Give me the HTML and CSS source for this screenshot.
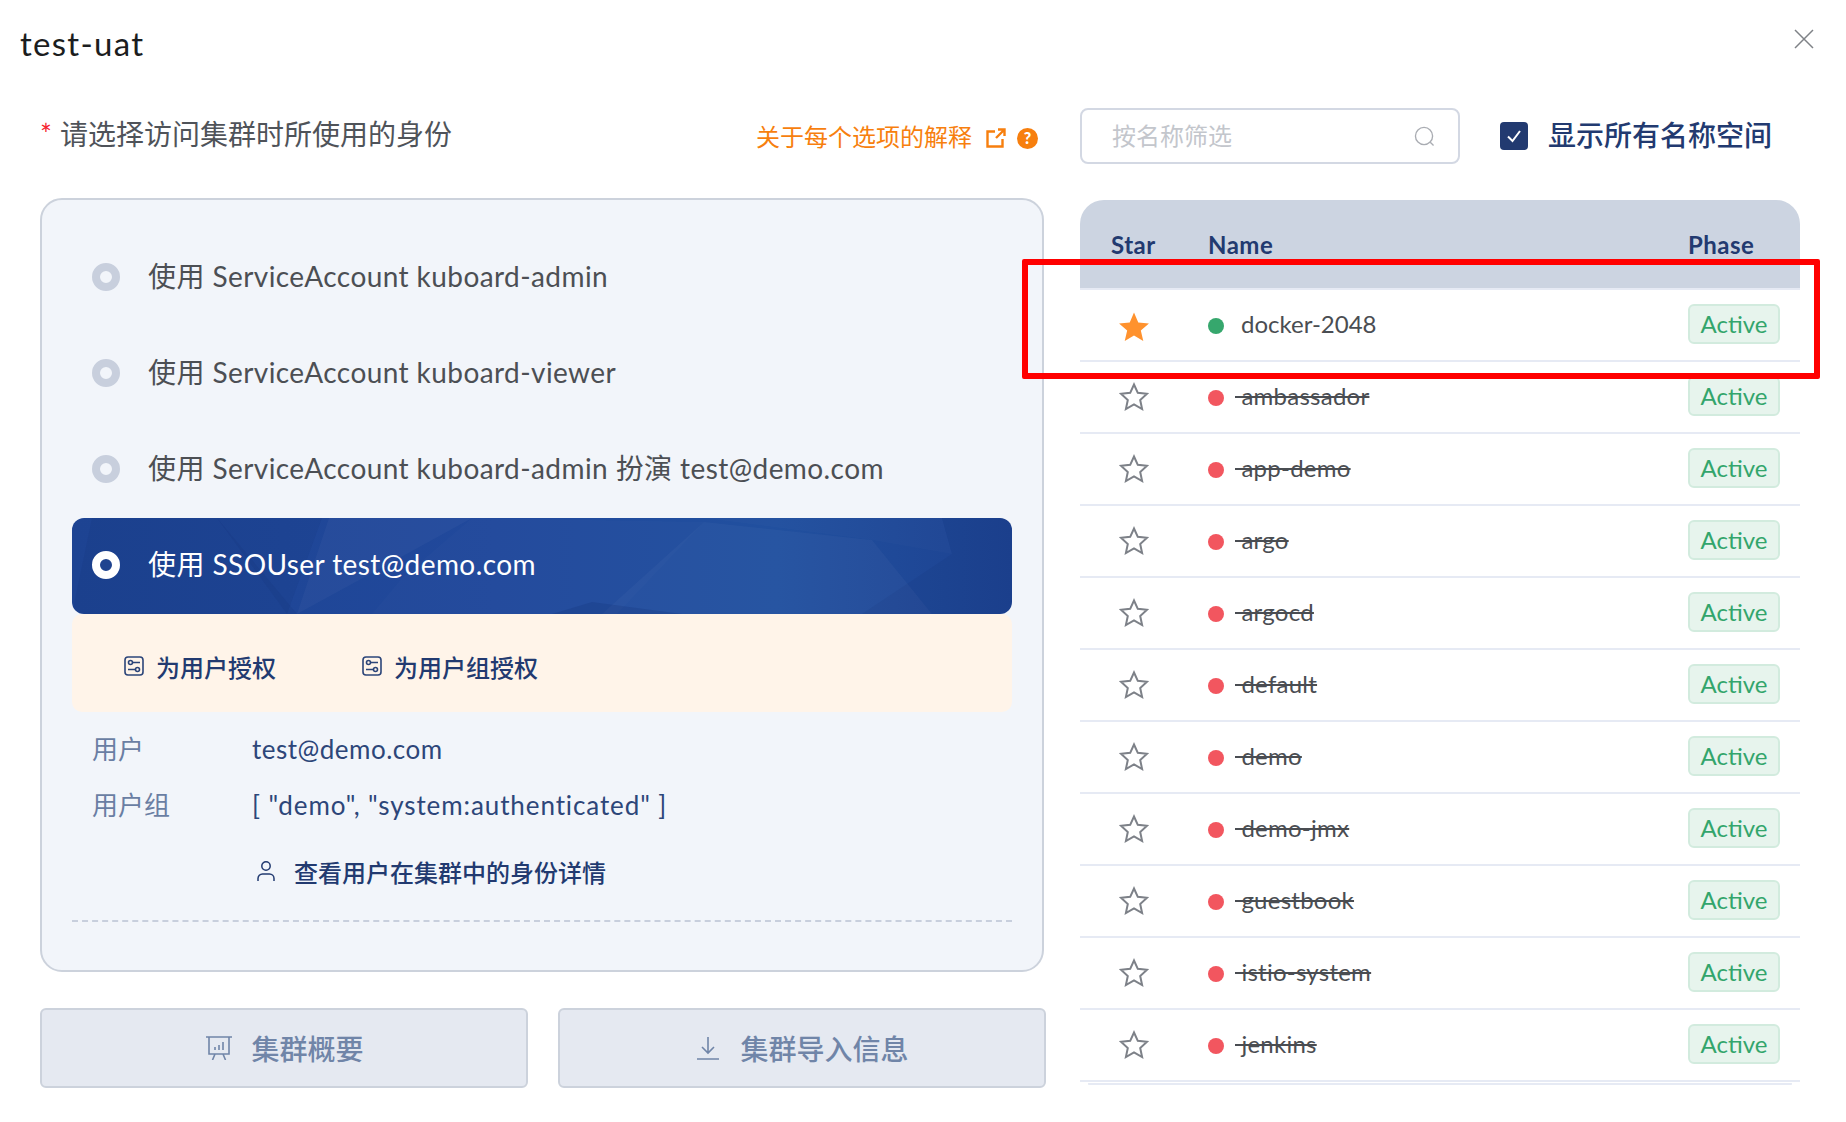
FILE: index.html
```html
<!DOCTYPE html>
<html lang="zh">
<head>
<meta charset="utf-8">
<title>test-uat</title>
<link rel="stylesheet" href="styles.css">
</head>
<body>
<div class="dialog">
  <header class="title-bar">
    <h1 class="title">test-uat</h1>
    <svg class="close" viewBox="0 0 20 20"><path d="M1 1l18 18M19 1L1 19"/></svg>
  </header>
  <div class="columns">
    <section class="left">
      <div class="left-head">
        <div class="label"><span class="req">*</span>请选择访问集群时所使用的身份</div>
        <div class="explain">
          <span class="explain-text">关于每个选项的解释</span>
          <svg class="ext" viewBox="0 0 20 20"><path d="M9 3.500H1.500V18.500h15V11M12 1.500h6.500V8M18 2l-8 8"/></svg>
          <svg class="help" viewBox="0 0 21 21"><circle cx="10.500" cy="10.500" r="10.500"/><text x="10.500" y="16" text-anchor="middle">?</text></svg>
        </div>
      </div>
      <div class="panel">
        <div class="opt"><span class="radio"></span><span class="opt-text">使用 ServiceAccount kuboard-admin</span></div>
        <div class="opt"><span class="radio"></span><span class="opt-text">使用 ServiceAccount kuboard-viewer</span></div>
        <div class="opt"><span class="radio"></span><span class="opt-text">使用 ServiceAccount kuboard-admin 扮演 test@demo.com</span></div>
        <div class="opt opt-on">
          <svg class="facets" viewBox="0 0 940 96" preserveAspectRatio="none">
            <polygon class="dk" points="20,0 145,0 225,96 0,96"/>
            <polygon class="dk" points="145,0 250,0 215,96"/>
            <polygon class="lt" points="257,0 400,0 300,55 225,96"/>
            <polygon class="lt2" points="400,0 632,4 545,96 300,96 330,60"/>
            <polygon class="lt" points="632,4 800,22 860,96 530,96"/>
            <polygon class="lt2" points="632,0 870,0 880,36 800,22"/>
            <polygon class="dk" points="870,0 940,0 940,96 790,96 880,36"/>
            <polygon class="dk2" points="520,84 610,96 480,96"/>
          </svg>
          <span class="radio"></span><span class="opt-text">使用 SSOUser test@demo.com</span>
        </div>
        <div class="grant">
          <div class="grant-item">
            <svg class="ico-ctl" viewBox="0 0 20 20"><rect x="1" y="1" width="18" height="18" rx="3"/><circle cx="6.500" cy="6.500" r="2"/><circle cx="13.500" cy="13.500" r="2"/><path d="M8.500 6.500H16M4 13.500h7.500"/></svg>
            <span>为用户授权</span>
          </div>
          <div class="grant-item">
            <svg class="ico-ctl" viewBox="0 0 20 20"><rect x="1" y="1" width="18" height="18" rx="3"/><circle cx="6.500" cy="6.500" r="2"/><circle cx="13.500" cy="13.500" r="2"/><path d="M8.500 6.500H16M4 13.500h7.500"/></svg>
            <span>为用户组授权</span>
          </div>
        </div>
        <dl class="info">
          <div class="info-row"><dt>用户</dt><dd>test@demo.com</dd></div>
          <div class="info-row"><dt>用户组</dt><dd class="groups">[ "demo", "system:authenticated" ]</dd></div>
        </dl>
        <div class="identity">
          <svg class="ico-user" viewBox="0 0 18 20"><circle cx="9" cy="5" r="4.200"/><path d="M1 20v-2.500A4.500 4.500 0 0 1 5.500 13h7a4.500 4.500 0 0 1 4.500 4.500V20"/></svg>
          <span>查看用户在集群中的身份详情</span>
        </div>
        <div class="dash"></div>
      </div>
      <div class="actions">
        <button class="btn">
          <svg class="ico-board" viewBox="0 0 26 24"><path d="M0 1h26M3 1v17h20V1M9 18l-2.500 6M17 18l2.500 6M9 14v-3M13 14V9M17 14V6"/></svg>
          <span>集群概要</span>
        </button>
        <button class="btn">
          <svg class="ico-down" viewBox="0 0 22 24"><path d="M11 1v16M5 11l6 6 6-6M0 23h22"/></svg>
          <span>集群导入信息</span>
        </button>
      </div>
    </section>
    <section class="right">
      <div class="right-head">
        <div class="search">
          <span class="lift">按名称筛选</span>
          <svg class="ico-search" viewBox="0 0 22 22"><circle cx="10.500" cy="10.500" r="9"/><path d="M17 17l3.500 3.500"/></svg>
        </div>
        <div class="check">
          <span class="box"><svg viewBox="0 0 28 28"><path d="M8 14.500l4.500 4.500L20 9"/></svg></span>
          <span class="lift">显示所有名称空间</span>
        </div>
      </div>
      <div class="table">
        <div class="thead">
          <span class="c-star">Star</span><span class="c-name">Name</span><span class="c-phase">Phase</span>
        </div>
        <div class="row">
          <svg class="star star-on" viewBox="0 0 30 30"><path d="M15 1.500l4 9.300 10 .9-7.600 6.600 2.300 9.800L15 23l-8.700 5.100 2.300-9.800L1 11.700l10-.9z"/></svg>
          <div class="c-name cell"><i class="dot ok"></i><span>docker-2048</span></div>
          <span class="tag">Active</span>
        </div>
        <div class="row">
          <svg class="star" viewBox="0 0 30 30"><path d="M15 2.500l3.800 8.300 9.200 1-6.800 6.200 1.900 9-8.100-4.600-8.100 4.600 1.900-9L2 11.800l9.200-1z"/></svg>
          <div class="c-name cell"><i class="dot bad"></i><del>&nbsp;ambassador</del></div>
          <span class="tag">Active</span>
        </div>
        <div class="row">
          <svg class="star" viewBox="0 0 30 30"><path d="M15 2.500l3.800 8.300 9.200 1-6.800 6.200 1.900 9-8.100-4.600-8.100 4.600 1.900-9L2 11.800l9.200-1z"/></svg>
          <div class="c-name cell"><i class="dot bad"></i><del>&nbsp;app-demo</del></div>
          <span class="tag">Active</span>
        </div>
        <div class="row">
          <svg class="star" viewBox="0 0 30 30"><path d="M15 2.500l3.800 8.300 9.200 1-6.800 6.200 1.900 9-8.100-4.600-8.100 4.600 1.900-9L2 11.800l9.200-1z"/></svg>
          <div class="c-name cell"><i class="dot bad"></i><del>&nbsp;argo</del></div>
          <span class="tag">Active</span>
        </div>
        <div class="row">
          <svg class="star" viewBox="0 0 30 30"><path d="M15 2.500l3.800 8.300 9.200 1-6.800 6.200 1.900 9-8.100-4.600-8.100 4.600 1.900-9L2 11.800l9.200-1z"/></svg>
          <div class="c-name cell"><i class="dot bad"></i><del>&nbsp;argocd</del></div>
          <span class="tag">Active</span>
        </div>
        <div class="row">
          <svg class="star" viewBox="0 0 30 30"><path d="M15 2.500l3.800 8.300 9.200 1-6.800 6.200 1.900 9-8.100-4.600-8.100 4.600 1.900-9L2 11.800l9.200-1z"/></svg>
          <div class="c-name cell"><i class="dot bad"></i><del>&nbsp;default</del></div>
          <span class="tag">Active</span>
        </div>
        <div class="row">
          <svg class="star" viewBox="0 0 30 30"><path d="M15 2.500l3.800 8.300 9.200 1-6.800 6.200 1.900 9-8.100-4.600-8.100 4.600 1.900-9L2 11.800l9.200-1z"/></svg>
          <div class="c-name cell"><i class="dot bad"></i><del>&nbsp;demo</del></div>
          <span class="tag">Active</span>
        </div>
        <div class="row">
          <svg class="star" viewBox="0 0 30 30"><path d="M15 2.500l3.800 8.300 9.200 1-6.800 6.200 1.900 9-8.100-4.600-8.100 4.600 1.900-9L2 11.800l9.200-1z"/></svg>
          <div class="c-name cell"><i class="dot bad"></i><del>&nbsp;demo-jmx</del></div>
          <span class="tag">Active</span>
        </div>
        <div class="row">
          <svg class="star" viewBox="0 0 30 30"><path d="M15 2.500l3.800 8.300 9.200 1-6.800 6.200 1.900 9-8.100-4.600-8.100 4.600 1.900-9L2 11.800l9.200-1z"/></svg>
          <div class="c-name cell"><i class="dot bad"></i><del>&nbsp;guestbook</del></div>
          <span class="tag">Active</span>
        </div>
        <div class="row">
          <svg class="star" viewBox="0 0 30 30"><path d="M15 2.500l3.800 8.300 9.200 1-6.800 6.200 1.900 9-8.100-4.600-8.100 4.600 1.900-9L2 11.800l9.200-1z"/></svg>
          <div class="c-name cell"><i class="dot bad"></i><del>&nbsp;istio-system</del></div>
          <span class="tag">Active</span>
        </div>
        <div class="row">
          <svg class="star" viewBox="0 0 30 30"><path d="M15 2.500l3.800 8.300 9.200 1-6.800 6.200 1.900 9-8.100-4.600-8.100 4.600 1.900-9L2 11.800l9.200-1z"/></svg>
          <div class="c-name cell"><i class="dot bad"></i><del>&nbsp;jenkins</del></div>
          <span class="tag">Active</span>
        </div>
        <div class="table-end"></div>
      </div>
    </section>
  </div>
  <div class="highlight"></div>
</div>
</body>
</html>
```
FILE: styles.css
```css
* { box-sizing: border-box; }
html, body { margin: 0; padding: 0; background: #fff; }
body {
  width: 1846px;
  height: 1122px;
  overflow: hidden;
  font-family: "Lato", "Noto Sans CJK SC", sans-serif;
  color: #4a4d52;
}
.dialog { position: relative; width: 1846px; height: 1122px; }

.title-bar { height: 88px; display: flex; justify-content: space-between; align-items: flex-start; padding: 29px 32px 0 20px; }
.title { margin: -1px 0 0; font-size: 33px; line-height: 30px; font-weight: 400; color: #1b1d20; letter-spacing: 1.3px; }
.close { width: 20px; height: 20px; fill: none; stroke: #7f8287; stroke-width: 1.5; }

.columns { display: flex; padding-left: 40px; }
.left { width: 1006px; }
.right { width: 720px; margin-left: 34px; }

.left-head { height: 110px; display: flex; justify-content: space-between; padding: 29px 8px 0 0; }
.label { font-size: 28px; line-height: 34px; color: #4f5359; }
.req { color: #f5222d; margin-right: 8px; }
.explain { display: flex; align-items: center; height: 34px; margin-top: 4px; color: #f77f0e; font-size: 24px; }
.explain-text { padding-bottom: 6px; }
.ext { width: 20px; height: 20px; margin-left: 14px; fill: none; stroke: #f77f0e; stroke-width: 2.400; }
.help { width: 21px; height: 21px; margin-left: 11px; fill: #f77f0e; }
.help text { fill: #fff; font-size: 16px; font-weight: 900; font-family: "Lato", sans-serif; }

.panel {
  width: 1004px;
  height: 774px;
  padding: 30px 30px 0;
  background: #f2f5fa;
  border: 2px solid #ccd2dc;
  border-radius: 22px;
}
.opt {
  position: relative;
  height: 96px;
  display: flex;
  align-items: center;
  padding: 0 0 2px 20px;
  font-size: 28px;
  letter-spacing: .42px;
  color: #4c4f54;
}
.opt-text { position: relative; padding-bottom: 4px; }
.radio {
  position: relative;
  width: 28px;
  height: 28px;
  flex: none;
  margin-right: 28px;
  border-radius: 50%;
  border: 8px solid #c8cfdd;
  background: #f2f5fa;
}
.opt-on {
  color: #fff;
  border-radius: 12px;
  overflow: hidden;
  background: linear-gradient(90deg, #1d4392 0%, #21499c 45%, #21509f 75%, #1d4291 100%);
}
.opt-on .radio { background: #1f438f; border-color: #fff; }
.facets { position: absolute; left: 0; top: 0; width: 100%; height: 100%; }
.facets .lt { fill: rgba(255,255,255,.03); }
.facets .lt2 { fill: rgba(255,255,255,.015); }
.facets .dk { fill: rgba(10,30,90,.07); }
.facets .dk2 { fill: rgba(10,30,90,.14); }

.grant {
  height: 98px;
  display: flex;
  align-items: center;
  padding: 6px 0 0 52px;
  background: #fff4e9;
  border-radius: 10px;
}
.grant-item { display: flex; align-items: center; margin-right: 86px; font-size: 24px; font-weight: 500; color: #223a70; }
.ico-ctl { width: 20px; height: 20px; margin-right: 12px; fill: none; stroke: #2c4579; stroke-width: 1.600; }

.info { margin: 0; padding: 8px 0 0 20px; }
.info-row { height: 56px; display: flex; align-items: center; font-size: 26px; }
.info-row dt { width: 160px; padding-bottom: 2px; color: #6a7ea3; }
.info-row dd { margin: 0; padding-top: 1px; color: #2d4679; letter-spacing: .5px; }
.info-row .groups { letter-spacing: .9px; }

.identity { display: flex; align-items: center; height: 36px; margin-top: 21px; padding-left: 185px; font-size: 24px; font-weight: 500; color: #223a70; }
.ico-user { width: 18px; height: 20px; margin-right: 19px; fill: none; stroke: #223a70; stroke-width: 1.500; }
.dash { width: 940px; margin-top: 31px; border-top: 2px dashed #c8cfdd; }

.actions { display: flex; justify-content: space-between; margin-top: 36px; width: 1006px; }
.btn {
  width: 488px;
  height: 80px;
  display: flex;
  align-items: center;
  justify-content: center;
  padding: 0 0 0 2px;
  background: #e5e9f1;
  border: 2px solid #ccd2dc;
  border-radius: 6px;
  font-family: inherit;
  font-size: 28px;
  font-weight: 500;
  color: #7085a8;
}
.ico-board { width: 26px; height: 24px; margin-right: 19px; fill: none; stroke: #7085a8; stroke-width: 1.600; }
.ico-down { width: 22px; height: 24px; margin-right: 21px; fill: none; stroke: #7085a8; stroke-width: 1.600; }

.right-head { height: 112px; display: flex; padding-top: 20px; }
.search {
  width: 380px;
  height: 56px;
  display: flex;
  align-items: center;
  justify-content: space-between;
  padding: 0 23px 0 30px;
  border: 2px solid #d3d8e3;
  border-radius: 8px;
  font-size: 24px;
  color: #c3c6cc;
}
.lift { padding-bottom: 4px; }
.ico-search { width: 21px; height: 21px; fill: none; stroke: #a9acb2; stroke-width: 1.400; }
.check { display: flex; align-items: center; height: 56px; margin-left: 40px; font-size: 28px; font-weight: 500; color: #223a70; }
.box { width: 28px; height: 28px; margin-right: 20px; border-radius: 4px; background: #223a70; }
.box svg { display: block; fill: none; stroke: #fff; stroke-width: 2; }

.table { width: 720px; }
.thead {
  height: 90px;
  display: flex;
  align-items: center;
  padding-left: 31px;
  background: #ccd4e1;
  border-bottom: 2px solid #e6eaf4;
  border-radius: 24px 24px 0 0;
  font-size: 24px;
  font-weight: 700;
  letter-spacing: .5px;
  color: #223a70;
  line-height: 90px;
}
.thead span { padding-top: 2px; }
.c-star { width: 97px; }
.c-name { flex: 1; }
.c-phase { width: 112px; }

.row { height: 72px; display: flex; align-items: center; padding-left: 39px; border-bottom: 2px solid #e6eaf4; font-size: 24px; }
.star { width: 30px; height: 30px; margin: -1px 59px 0 0; flex: none; fill: none; stroke: #7d8188; stroke-width: 2; }
.star-on { width: 32px; height: 32px; margin: 3px 58px 0 -1px; fill: #ff922e; stroke: none; }
.cell { display: flex; align-items: center; }
.dot { width: 16px; height: 16px; margin: 2px 11px 0 0; border-radius: 50%; flex: none; }
.dot.ok { background: #36a76d; }
.dot.bad { background: #f2565f; }
.cell span { margin-left: 6px; padding-bottom: 4px; }
.cell del { padding-bottom: 4px; letter-spacing: .25px; text-decoration-thickness: 2px; }
.tag {
  width: 92px;
  height: 40px;
  margin: -2px 20px 0 0;
  padding-bottom: 2px;
  display: flex;
  align-items: center;
  justify-content: center;
  background: #e7f4ed;
  border: 2px solid #d2ebde;
  border-radius: 6px;
  color: #33a56c;
}
.table-end { height: 4px; margin: 1px 8px 0; border-top: 2px solid #e6eaf4; border-radius: 0 0 10px 10px; }

.highlight {
  position: absolute;
  left: 1022px;
  top: 259px;
  width: 798px;
  height: 120px;
  border: 6px solid #ff0000;
  border-radius: 2px;
  pointer-events: none;
}
```
